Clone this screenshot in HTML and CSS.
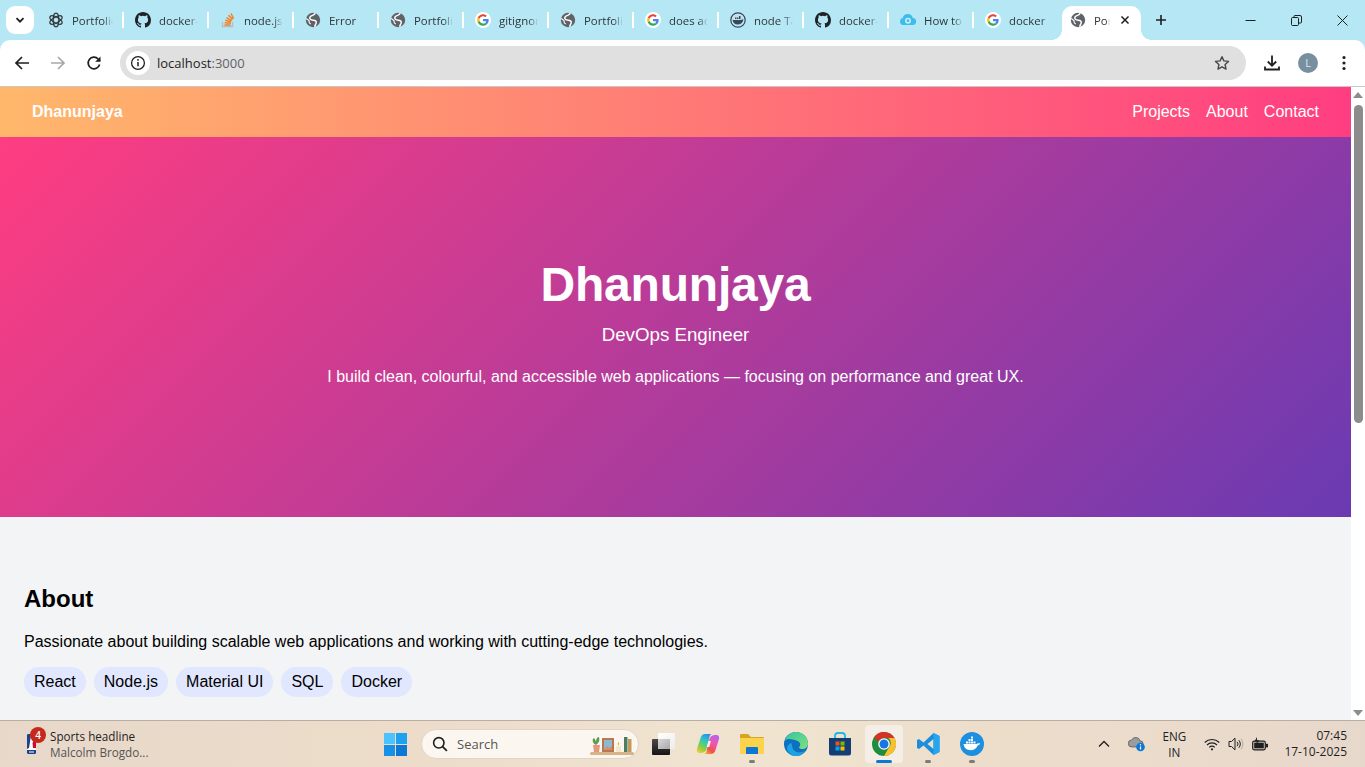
FILE: index.html
```html
<!DOCTYPE html>
<html lang="en">
<head>
<meta charset="utf-8">
<title>Portfolio</title>
<link rel="stylesheet" href="styles.css">
</head>
<body>
<svg class="defs" width="0" height="0" aria-hidden="true">
  <defs>
    <symbol id="globe" viewBox="0 0 16 16">
      <circle cx="8" cy="8" r="7.200" fill="#5f6368"/>
      <path d="M10.200 1.200C9.800 3.600 6.600 3 5.200 4.800 3.600 7 6.200 8 8.200 8.200c2 .2 3.400.8 3 2.600-.3 1.300-1.200 2.400-1.600 4" fill="none" stroke="#fff" stroke-width="1.500"/>
      <path d="M1.200 6.500 4 8.600l.3 2.200 1.500 1.400" fill="none" stroke="#fff" stroke-width="1.100"/>
    </symbol>
    <symbol id="github" viewBox="0 0 16 16">
      <path fill="#1f2328" d="M8 0C3.58 0 0 3.58 0 8c0 3.54 2.29 6.53 5.47 7.59.4.07.55-.17.55-.38 0-.19-.01-.82-.01-1.49-2.010.37-2.530-.49-2.690-.94-.09-.23-.48-.94-.82-1.130-.28-.15-.68-.52-.01-.53.63-.01 1.080.58 1.230.82.720 1.210 1.870.87 2.330.66.070-.52.280-.87.510-1.070-1.780-.2-3.640-.89-3.640-3.950 0-.87.31-1.590.82-2.150-.08-.2-.36-1.020.08-2.120 0 0 .67-.21 2.200.82a7.500 7.500 0 0 1 4 0c1.530-1.040 2.200-.82 2.200-.82.440 1.100.160 1.920.080 2.120.510.560.820 1.270.820 2.150 0 3.070-1.870 3.750-3.650 3.950.290.250.540.730.540 1.480 0 1.070-.010 1.930-.010 2.200 0 .210.150.460.550.380A8.010 8.010 0 0 0 16 8c0-4.420-3.580-8-8-8z"/>
    </symbol>
    <symbol id="google" viewBox="0 0 48 48">
      <circle cx="24" cy="24" r="24" fill="#fff"/>
      <path fill="#ea4335" d="M24 13c3 0 5.200 1.100 6.900 2.700l4.600-4.500C32.500 8.400 28.700 6.500 24 6.500c-6.800 0-12.700 3.900-15.600 9.700l5.400 4.200C15.200 16.100 19.200 13 24 13z"/>
      <path fill="#4285f4" d="M41 24.400c0-1.400-.1-2.500-.4-3.600H24v6.600h9.800c-.4 2.300-1.700 4.200-3.700 5.500l5.300 4.100c3.500-3.200 5.600-7 5.600-12.600z"/>
      <path fill="#fbbc05" d="M13.800 27.600c-.4-1.100-.6-2.300-.6-3.600s.2-2.500.6-3.600l-5.400-4.200C7.200 18.500 6.500 21.200 6.500 24s.7 5.500 1.900 7.800z"/>
      <path fill="#34a853" d="M24 41.500c4.700 0 8.700-1.500 11.400-4.400l-5.300-4.100c-1.500 1-3.400 1.700-6.100 1.700-4.800 0-8.800-3.100-10.200-7.500l-5.400 4.200c2.900 5.800 8.800 10.100 15.600 10.100z"/>
    </symbol>
    <symbol id="openai" viewBox="0 0 16 16">
      <g fill="none" stroke="#33383c" stroke-width="1.250">
        <ellipse cx="8" cy="8" rx="2.800" ry="6.800"/>
        <ellipse cx="8" cy="8" rx="2.800" ry="6.800" transform="rotate(60 8 8)"/>
        <ellipse cx="8" cy="8" rx="2.800" ry="6.800" transform="rotate(120 8 8)"/>
      </g>
    </symbol>
    <symbol id="stack" viewBox="0 0 16 16">
      <path fill="none" stroke="#bcbbbb" stroke-width="1.300" d="M2.500 10v4.500h10V10"/>
      <path fill="none" stroke="#f48024" stroke-width="1.500" d="M4.500 13h6M4.700 10.700l6 .6M5.300 8.200l5.800 1.600M6.500 5.700l5.200 3M8.500 3.200l4.200 4.200M11 1.500l2.600 5"/>
    </symbol>
    <symbol id="dockerring" viewBox="0 0 16 16">
      <circle cx="8" cy="8" r="7.200" fill="#c9e0ea" stroke="#2e4a5e" stroke-width="1.200"/>
      <path fill="#2e4a5e" d="M2.500 8h8c.6-.5 1.500-.8 3-.5-.5 3-2.800 5-6 5-2.700 0-4.500-1.800-5-4.500zM5 5.500h1.500V7H5zM7 5.500h1.500V7H7zM9 4h1.500v3H9z"/>
    </symbol>
    <symbol id="cloud" viewBox="0 0 16 16">
      <path fill="#3dbdee" d="M3.500 13a3.500 3.500 0 0 1-.8-6.900A5.200 5.200 0 0 1 12.800 6 3.500 3.500 0 0 1 12.500 13z"/>
      <circle cx="8" cy="8.700" r="3" fill="#c9eefa"/>
      <circle cx="8" cy="8.700" r="1.400" fill="#3dbdee"/>
    </symbol>
    <symbol id="dockerwhale" viewBox="0 0 24 24">
      <circle cx="12" cy="12" r="12" fill="#1d8fe1"/>
      <path fill="#fff" d="M3.500 12h13c.8-.8 2.200-1 3.800-.5-.6 1.200-1.600 1.800-2.600 1.900-1.200 3-3.800 4.800-7.200 4.800-3.900 0-6.500-2.400-7-6.200zM6 9.500h2v2H6zM8.500 9.500h2v2h-2zM11 9.500h2v2h-2zM13.500 9.500h2v2h-2zM8.500 7h2v2h-2zM11 7h2v2h-2zM11 4.500h2v2h-2z"/>
    </symbol>
  </defs>
</svg>

<div class="screen">
  <header class="tabstrip">
    <button class="tabsearch" type="button" aria-label="Search tabs">
      <svg width="12" height="12" viewBox="0 0 12 12"><path d="M2.500 4.200 6 7.700l3.500-3.500" fill="none" stroke="#1f1f1f" stroke-width="1.800"/></svg>
    </button>
    <div class="tabs">
      <div class="tab"><svg class="favicon"><use href="#openai"/></svg><span class="tabtitle">Portfolio</span></div>
      <div class="tab"><svg class="favicon"><use href="#github"/></svg><span class="tabtitle">docker-compose</span></div>
      <div class="tab"><svg class="favicon"><use href="#stack"/></svg><span class="tabtitle">node.js</span></div>
      <div class="tab"><svg class="favicon"><use href="#globe"/></svg><span class="tabtitle">Error</span></div>
      <div class="tab"><svg class="favicon"><use href="#globe"/></svg><span class="tabtitle">Portfolio</span></div>
      <div class="tab"><svg class="favicon"><use href="#google"/></svg><span class="tabtitle">gitignore</span></div>
      <div class="tab"><svg class="favicon"><use href="#globe"/></svg><span class="tabtitle">Portfolio</span></div>
      <div class="tab"><svg class="favicon"><use href="#google"/></svg><span class="tabtitle">does add</span></div>
      <div class="tab"><svg class="favicon"><use href="#dockerring"/></svg><span class="tabtitle">node Tags</span></div>
      <div class="tab"><svg class="favicon"><use href="#github"/></svg><span class="tabtitle">docker-compose</span></div>
      <div class="tab"><svg class="favicon"><use href="#cloud"/></svg><span class="tabtitle">How to</span></div>
      <div class="tab tab-last"><svg class="favicon"><use href="#google"/></svg><span class="tabtitle">docker</span></div>
      <div class="tab tab-active">
        <svg class="favicon"><use href="#globe"/></svg>
        <span class="tabtitle tabtitle-short">Portfolio</span>
        <svg class="tabclose" width="10" height="10" viewBox="0 0 10 10"><path d="m1.500 1.500 7 7m0-7-7 7" stroke="#1f1f1f" stroke-width="1.500"/></svg>
      </div>
    </div>
    <button class="newtab" type="button" aria-label="New tab">
      <svg width="12" height="12" viewBox="0 0 12 12"><path d="M6 1v10M1 6h10" stroke="#1f1f1f" stroke-width="1.600"/></svg>
    </button>
    <div class="winctl">
      <span class="winbtn"><svg width="11" height="11" viewBox="0 0 11 11"><path d="M.5 5.500h10" stroke="#1f1f1f"/></svg></span>
      <span class="winbtn"><svg width="11" height="11" viewBox="0 0 11 11"><path d="M.5 3.500a1 1 0 0 1 1-1h5a1 1 0 0 1 1 1v6a1 1 0 0 1-1 1h-5a1 1 0 0 1-1-1zM3 2.500v-1a1 1 0 0 1 1-1h5a1.500 1.500 0 0 1 1.500 1.500v5a1 1 0 0 1-1 1h-2" fill="none" stroke="#1f1f1f"/></svg></span>
      <span class="winbtn"><svg width="11" height="11" viewBox="0 0 11 11"><path d="m.5.500 10 10m0-10-10 10" stroke="#1f1f1f"/></svg></span>
    </div>
  </header>

  <div class="toolbar">
    <svg class="navicon" width="16" height="16" viewBox="0 0 16 16"><path d="M15 8H2.500M8 2 2 8l6 6" fill="none" stroke="#1f1f1f" stroke-width="1.700"/></svg>
    <svg class="navicon" width="16" height="16" viewBox="0 0 16 16"><path d="M1 8h12.500M8 2l6 6-6 6" fill="none" stroke="#a8a8a8" stroke-width="1.700"/></svg>
    <svg class="navicon" width="16" height="16" viewBox="0 0 16 16"><path d="M13.600 9.500A5.800 5.800 0 1 1 12.200 4L14 5.800" fill="none" stroke="#1f1f1f" stroke-width="1.700"/><path d="M14.500 1.500v5.300H9.200z" fill="#1f1f1f"/></svg>
    <div class="omnibox">
      <span class="siteinfo"><svg width="16" height="16" viewBox="0 0 16 16"><circle cx="8" cy="8" r="6.400" fill="none" stroke="#1f1f1f" stroke-width="1.300"/><path d="M8 7v4.300" stroke="#1f1f1f" stroke-width="1.500"/><circle cx="8" cy="4.900" r=".9" fill="#1f1f1f"/></svg></span>
      <span class="url">localhost<span class="urlport">:3000</span></span>
      <svg class="star" width="16" height="16" viewBox="0 0 16 16"><path d="m8 1.700 1.900 4.200 4.600.5-3.400 3.100.9 4.600L8 11.800l-4 2.300.9-4.600L1.500 6.400l4.600-.5z" fill="none" stroke="#474747" stroke-width="1.400" stroke-linejoin="round"/></svg>
    </div>
    <div class="toolicons">
      <svg width="18" height="18" viewBox="0 0 18 18"><path d="M9 1.500v10M4.800 7.500 9 11.700l4.200-4.200M2 12.500v3h14v-3" fill="none" stroke="#1f1f1f" stroke-width="1.800"/></svg>
      <span class="avatar">L</span>
      <svg width="4" height="16" viewBox="0 0 4 16"><circle cx="2" cy="2.500" r="1.600" fill="#1f1f1f"/><circle cx="2" cy="8" r="1.600" fill="#1f1f1f"/><circle cx="2" cy="13.500" r="1.600" fill="#1f1f1f"/></svg>
    </div>
  </div>

  <div class="viewport">
    <main class="page">
      <nav class="sitenav">
        <a class="brand">Dhanunjaya</a>
        <div class="navlinks"><a>Projects</a><a>About</a><a>Contact</a></div>
      </nav>
      <section class="hero">
        <h1>Dhanunjaya</h1>
        <p class="role">DevOps Engineer</p>
        <p class="intro">I build clean, colourful, and accessible web applications — focusing on performance and great UX.</p>
      </section>
      <section class="about">
        <h2>About</h2>
        <p>Passionate about building scalable web applications and working with cutting-edge technologies.</p>
        <ul class="chips">
          <li>React</li><li>Node.js</li><li>Material UI</li><li>SQL</li><li>Docker</li>
        </ul>
      </section>
    </main>
    <div class="scrollbar">
      <span class="arrow arrow-up"></span>
      <span class="thumb"></span>
      <span class="arrow arrow-down"></span>
    </div>
  </div>

  <footer class="taskbar">
    <div class="widget">
      <span class="widgeticon">
        <svg width="9" height="20" viewBox="0 0 9 20"><rect width="9" height="20" rx="1.200" fill="#fff"/><path d="M0 1.200A1.200 1.200 0 0 1 1.200 0H4L3 8l-1 6-2 1z" fill="#1d428a"/><path d="M5 0h2.800A1.200 1.200 0 0 1 9 1.200V14H6l-.5-5L7 6z" fill="#c8102e"/><path d="M0 16h9v2.800A1.200 1.200 0 0 1 7.800 20H1.200A1.200 1.200 0 0 1 0 18.800z" fill="#1d428a"/><path d="M2 17.500h5v1H2z" fill="#fff"/></svg>
        <span class="badge">4</span>
      </span>
      <span class="widgettext"><span class="widgethead">Sports headline</span><span class="widgetsub">Malcolm Brogdo...</span></span>
    </div>
    <div class="centerbar">
      <span class="tb"><svg width="23" height="23" viewBox="0 0 23 23"><rect width="11" height="11" fill="#4cc2ff"/><rect x="12" width="11" height="11" fill="#1ea1ef"/><rect y="12" width="11" height="11" fill="#1592e6"/><rect x="12" y="12" width="11" height="11" fill="#0a78d4"/></svg></span>
      <div class="searchbox">
        <svg width="16" height="16" viewBox="0 0 16 16"><circle cx="6.800" cy="6.800" r="5.200" fill="none" stroke="#1f1f1f" stroke-width="1.600"/><path d="m10.600 10.600 4.300 4.300" stroke="#1f1f1f" stroke-width="1.800"/></svg>
        <span class="searchlabel">Search</span>
        <svg class="shelf" width="46" height="24" viewBox="0 0 46 24">
          <rect x="1" y="20" width="44" height="3" rx="1.500" fill="#d8b388"/>
          <path d="M4 13h7l-1 7H5z" fill="#e5977a"/>
          <path d="M7 13C3 11 3 7 5 6c1 1 2 3 2 4 0-3 1-5 3-5 1 3 0 6-3 8z" fill="#5f9a57"/>
          <rect x="13" y="6" width="12" height="14" fill="#b8774e"/>
          <rect x="15" y="8" width="8" height="10" fill="#8fb9cf"/>
          <path d="M15 18l3-4 2 2 3-2v4z" fill="#d78d68"/>
          <rect x="27" y="14" width="5" height="6" rx="1" fill="#f7e6c5"/>
          <path d="M29.500 10c1 1.200 1 2.500 0 3.500-1-1-1-2.300 0-3.500z" fill="#f2a640"/>
          <rect x="35" y="5" width="3.500" height="15" fill="#4f7d5c"/>
          <rect x="39" y="7" width="3.500" height="13" fill="#c49a5c"/>
        </svg>
      </div>
      <span class="tb"><svg width="24" height="24" viewBox="0 0 24 24"><defs><linearGradient id="tvd" x1="0" y1="0" x2="0" y2="1"><stop offset="0" stop-color="#4a4a4a"/><stop offset="1" stop-color="#141414"/></linearGradient><linearGradient id="tvw" x1="0" y1="0" x2="1" y2="1"><stop offset="0" stop-color="#fff"/><stop offset="1" stop-color="#ececec"/></linearGradient><linearGradient id="tvo" x1="0" y1="0" x2="1" y2="1"><stop offset="0" stop-color="#d8d8d8"/><stop offset="1" stop-color="#a8a8a8"/></linearGradient></defs><rect x="6" y="1" width="17" height="16" rx="1" fill="url(#tvw)"/><rect y="7" width="18" height="16" rx="1" fill="url(#tvd)"/><rect x="6" y="7" width="12" height="10" fill="url(#tvo)"/></svg></span>
      <span class="tb"><svg width="24" height="24" viewBox="0 0 24 24"><defs><linearGradient id="cpa" x1=".7" y1="0" x2=".2" y2="1"><stop offset="0" stop-color="#2a8ff0"/><stop offset=".35" stop-color="#2fc6c0"/><stop offset=".7" stop-color="#7fd04a"/><stop offset="1" stop-color="#f5c92e"/></linearGradient><linearGradient id="cpb" x1=".8" y1="0" x2=".2" y2="1"><stop offset="0" stop-color="#b066f0"/><stop offset=".4" stop-color="#f055b0"/><stop offset=".75" stop-color="#f0504a"/><stop offset="1" stop-color="#f5a030"/></linearGradient></defs><path d="M15 22H8c1.500 0 2-1 2.400-2.500L13.500 7c.7-2.500 3-4 5.500-4h1.500c2 0 3.200 2 2.500 4L19.500 18c-.8 2.500-2.300 4-4.500 4z" fill="url(#cpb)"/><path d="M9 2h7c-1.500 0-2 1-2.400 2.500L10.500 17c-.7 2.500-3 4-5.500 4H3.500C1.500 21 .3 19 1 17L4.500 6C5.300 3.500 6.800 2 9 2z" fill="url(#cpa)"/><path d="M12.500 9h2.500l-1.700 6h-2.500z" fill="#f6f0e6"/></svg></span>
      <span class="tb tb-open"><svg width="24" height="24" viewBox="0 0 24 24"><path d="M0 3a1 1 0 0 1 1-1h7l3 3h12a1 1 0 0 1 1 1v3H0z" fill="#d9a520"/><path d="M0 6h24v15a1 1 0 0 1-1 1H1a1 1 0 0 1-1-1z" fill="#fcd34d"/><path d="M7 15h10a1 1 0 0 1 1 1v6H6v-6a1 1 0 0 1 1-1z" fill="#0a78d4"/></svg></span>
      <span class="tb"><svg width="24" height="24" viewBox="0 0 24 24"><defs><linearGradient id="edg" x1="0" y1="0" x2="1" y2="1"><stop offset="0" stop-color="#35c7a0"/><stop offset="1" stop-color="#7fe07c"/></linearGradient></defs><circle cx="12" cy="12" r="12" fill="#0f6fc0"/><path d="M1 9C2.500 3.500 7 0 12 0c7 0 12 5 12 11.500 0 3.500-2.500 5.500-5.500 5.500-2 0-3.500-.7-3.500-1.800 2-1.700 1.500-4.700-1-6C10 7.500 3 5.500 1 9z" fill="url(#edg)"/><path d="M8 13c0 4 3 7.500 7.500 7.500 2 0 4-.7 5.500-2-2 3.500-5.300 5.500-9 5.500C8 24 4 21 3 17c0-5 5-8 5-4z" fill="#1ba3e4"/></svg></span>
      <span class="tb"><svg width="24" height="24" viewBox="0 0 24 24"><path d="M7 6V4a3 3 0 0 1 3-3h4a3 3 0 0 1 3 3v2" fill="none" stroke="#1fb6e8" stroke-width="1.800"/><path d="M1 6h22v15a2.500 2.500 0 0 1-2.500 2.500h-17A2.500 2.500 0 0 1 1 21z" fill="#123e74"/><rect x="7.500" y="9.500" width="4" height="4" fill="#f25022"/><rect x="12.500" y="9.500" width="4" height="4" fill="#7fba00"/><rect x="7.500" y="14.500" width="4" height="4" fill="#00a4ef"/><rect x="12.500" y="14.500" width="4" height="4" fill="#ffb900"/></svg></span>
      <span class="tb tb-active"><svg width="24" height="24" viewBox="0 0 24 24"><circle cx="12" cy="12" r="12" fill="#1e8e3e"/><path d="M12 0a12 12 0 0 1 10.400 6H12a6 6 0 0 0-5.600 3.700L2.100 5.200A12 12 0 0 1 12 0z" fill="#d93025"/><path d="M22.400 6A12 12 0 0 1 12 24l5.200-9a6 6 0 0 0-1-9z" fill="#fbc02d"/><circle cx="12" cy="12" r="5.800" fill="#fff"/><circle cx="12" cy="12" r="4.500" fill="#1a73e8"/></svg></span>
      <span class="tb tb-open"><svg width="24" height="24" viewBox="0 0 24 24"><path d="M17.500 1 23.500 4v16l-6 3L7.500 13.500 3 17 1 16V8l2-1 4.500 3.500zM17.500 7l-6 5 6 5z" fill="#1c8fdc"/><path d="M17.500 1 23.500 4v16l-6 3z" fill="#24a7ee"/></svg></span>
      <span class="tb tb-open"><svg width="24" height="24"><use href="#dockerwhale"/></svg></span>
    </div>
    <div class="tray">
      <svg class="tray-chev" width="12" height="8" viewBox="0 0 12 8"><path d="m1 6.500 5-5 5 5" fill="none" stroke="#1f1f1f" stroke-width="1.300"/></svg>
      <span class="tray-cloud"><svg width="18" height="16" viewBox="0 0 18 16"><path d="M4 11a3.500 3.500 0 0 1-.4-7A4.500 4.500 0 0 1 12 4.800 3 3 0 0 1 12 11z" fill="#9a9da0" stroke="#3a3a3a" stroke-width=".6"/><circle cx="12.500" cy="11" r="4.300" fill="#0a78d4"/><path d="M12.500 10.500v3" stroke="#fff" stroke-width="1.200"/><circle cx="12.500" cy="8.800" r=".7" fill="#fff"/></svg></span>
      <span class="tray-lang"><span>ENG</span><span>IN</span></span>
      <span class="tray-sys">
        <svg width="16" height="13" viewBox="0 0 16 13"><path d="M.7 4.500a10.500 10.500 0 0 1 14.600 0M3 7a7 7 0 0 1 10 0M5.300 9.300a3.600 3.600 0 0 1 5.400 0" fill="none" stroke="#1f1f1f" stroke-width="1.100"/><circle cx="8" cy="11.300" r="1.100" fill="#1f1f1f"/></svg>
        <svg width="16" height="14" viewBox="0 0 16 14"><path d="M1 4.500h2.500L7 1.200v11.600L3.500 9.500H1z" fill="none" stroke="#1f1f1f"/><path d="M9 4.800a3 3 0 0 1 0 4.400M10.800 3.200a5.500 5.500 0 0 1 0 7.600" fill="none" stroke="#1f1f1f"/><path d="M13 1.800a8 8 0 0 1 0 10.400" fill="none" stroke="#b5aa9f"/></svg>
        <svg width="16" height="14" viewBox="0 0 16 14"><rect x=".7" y="4.200" width="12.600" height="8.600" rx="1.500" fill="#d8cabc" stroke="#1f1f1f" stroke-width="1.200"/><rect x="2.200" y="5.700" width="9.600" height="5.600" fill="#1f1f1f"/><rect x="14" y="6.800" width="2" height="3.600" fill="#1f1f1f"/><path d="M5 0 2.500 4.500H5L3.800 8 7.500 3.300H5z" fill="#1f1f1f"/></svg>
      </span>
      <span class="tray-clock"><span>07:45</span><span>17-10-2025</span></span>
    </div>
  </footer>
</div>
</body>
</html>
```

FILE: styles.css
```css
* { box-sizing: border-box; }
html, body { margin: 0; padding: 0; height: 100%; overflow: hidden; }
body { font-family: "Liberation Sans", Arial, sans-serif; color: #000; }
.defs { position: absolute; }
button { border: 0; padding: 0; background: none; font: inherit; }

.screen { width: 1365px; height: 767px; display: flex; flex-direction: column; overflow: hidden; background: #b5e7f4; }

/* Browser tab strip */
.tabstrip { height: 40px; background: #b5e7f4; display: flex; align-items: flex-end; flex: none; }
.tabsearch { width: 28px; height: 28px; margin: 0 5px 6px 6px; background: #fff; border-radius: 9px; display: flex; align-items: center; justify-content: center; }
.tabs { display: flex; height: 34px; }
.tab { width: 85px; height: 34px; display: flex; align-items: center; padding: 0 11px; gap: 8px; font: 11.4px "Open Sans", sans-serif; color: #30363a; position: relative; }
.tab:first-child { padding-left: 9px; }
.tab::after { content: ""; position: absolute; right: 0; top: 6px; width: 2px; height: 16px; background: #fff; }
.tab-last::after { display: none; }
.favicon { width: 16px; height: 16px; flex: none; margin-top: -6px; }
.tabtitle { flex: 1; min-width: 0; overflow: hidden; white-space: nowrap; margin-top: -6px; -webkit-mask-image: linear-gradient(90deg, #000 76%, transparent); mask-image: linear-gradient(90deg, #000 76%, transparent); }
.tab-last { width: 88px; }
.tab-active { width: 79px; background: #fff; border-radius: 10px 10px 0 0; padding: 0 11px 0 8px; }
.tab-active::before, .tab-active::after { content: ""; position: absolute; top: auto; bottom: 0; width: 10px; height: 10px; background: radial-gradient(circle at 0 0, transparent 9.5px, #fff 10px); }
.tab-active::before { left: -10px; right: auto; }
.tab-active::after { right: -10px; left: auto; background: radial-gradient(circle at 100% 0, transparent 9.5px, #fff 10px); }
.tabtitle-short { flex: none; width: 16px; }
.tabclose { flex: none; margin: -6px 0 0 2px; }
.newtab { width: 16px; height: 16px; margin: 0 0 12px 12px; display: flex; align-items: center; justify-content: center; }
.winctl { margin-left: auto; display: flex; height: 40px; }
.winbtn { width: 46px; height: 40px; display: flex; align-items: center; justify-content: center; }

/* Address toolbar */
.toolbar { height: 47px; flex: none; background: #fff; border-bottom: 1px solid #c8c8c8; border-radius: 10px 10px 0 0; display: flex; align-items: center; padding: 0 0 1px 14px; }
.navicon { flex: none; margin-right: 20px; }
.navicon:nth-child(3) { margin-right: 18px; }
.omnibox { width: 1126px; height: 34px; background: #e0e0e0; border-radius: 17px; display: flex; align-items: center; padding: 0 16px 0 6px; }
.siteinfo { width: 24px; height: 24px; background: #fff; border-radius: 50%; display: flex; align-items: center; justify-content: center; }
.url { margin-left: 7px; font: 13px "Open Sans", sans-serif; color: #1f1f1f; flex: 1; }
.urlport { color: #5f6368; }
.toolicons { display: flex; align-items: center; margin-left: 17px; }
.toolicons svg:first-child { margin-right: 17px; }
.avatar { width: 20px; height: 20px; border-radius: 50%; background: #76909f; color: #dfe7ec; font: 11px "Open Sans", sans-serif; display: flex; align-items: center; justify-content: center; margin-right: 24px; }

/* Page area */
.viewport { height: 633px; flex: none; display: flex; overflow: hidden; }
.page { width: 1351px; background: #f3f4f6; overflow: hidden; }
.sitenav { height: 50px; display: flex; align-items: center; justify-content: space-between; padding: 0 32px; background: linear-gradient(90deg, #ffb86b, #ff3d81); color: #fff; }
.brand { font-weight: 700; font-size: 16px; }
.navlinks { display: flex; gap: 16px; font-size: 16px; }
.hero { height: 380px; background: linear-gradient(135deg, #ff3d81, #6a3ab2); color: #fff; display: flex; flex-direction: column; align-items: center; padding-top: 120px; }
.hero h1 { font-size: 48px; line-height: 56px; margin: 0; font-weight: 700; letter-spacing: -0.2px; }
.role { font-size: 18.72px; line-height: 27px; margin: 8px 0 0; }
.intro { font-size: 16px; line-height: 24px; margin: 17px 0 0; }
.about { padding: 66px 24px 0; }
.about h2 { font-size: 24px; line-height: 32px; margin: 0; font-weight: 700; }
.about p { font-size: 16px; line-height: 24px; margin: 15px 0 0; }
.chips { list-style: none; display: flex; gap: 8px; margin: 13px 0 0; padding: 0; }
.chips li { height: 30px; line-height: 29px; padding: 0 10px; background: #e0e7ff; border-radius: 15px; font-size: 16px; }

/* Scrollbar */
.scrollbar { width: 14px; background: #fff; display: flex; flex-direction: column; align-items: center; }
.arrow { width: 0; height: 0; border-left: 5px solid transparent; border-right: 5px solid transparent; flex: none; }
.arrow-up { border-bottom: 6px solid #8c8c8c; margin-top: 5px; }
.thumb { width: 9px; height: 318px; background: #8c8c8c; border-radius: 5px; margin-top: 7px; }
.arrow-down { border-top: 6px solid #8c8c8c; margin-top: auto; margin-bottom: 4px; }

/* Windows taskbar */
.taskbar { height: 47px; flex: none; border-top: 1px solid #b9aea4; background: linear-gradient(90deg, #e8d8ca 0%, #ecdcc9 30%, #f0e4d0 55%, #ecddcb 75%, #e7d8cc 100%); display: flex; align-items: center; font-family: "Open Sans", sans-serif; color: #1f1f1f; }
.widget { width: 373px; display: flex; align-items: center; padding-left: 26px; flex: none; }
.widgeticon { position: relative; width: 10px; height: 20px; margin-right: 14px; }
.widgeticon svg { display: block; margin-left: 1px; }
.badge { position: absolute; left: 4px; top: -7px; width: 16px; height: 16px; border-radius: 50%; background: #c4291c; color: #fff; font-size: 10px; font-weight: 600; display: flex; align-items: center; justify-content: center; }
.widgettext { display: flex; flex-direction: column; font-size: 11.7px; line-height: 16px; }
.widgetsub { color: #555; }
.centerbar { display: flex; align-items: center; height: 38px; flex: none; }
.tb { width: 44px; height: 38px; display: flex; align-items: center; justify-content: center; position: relative; border-radius: 4px; }
.tb svg { display: block; }
.tb-open::after { content: ""; position: absolute; bottom: 0; left: 19px; width: 6px; height: 3px; border-radius: 2px; background: #7b7b7b; }
.tb-active { background: #f4eee6; width: 38px; margin: 0 3px; }
.tb-active::after { content: ""; position: absolute; bottom: 0; left: 11px; width: 16px; height: 3px; border-radius: 2px; background: #0a78d4; }
.searchbox { width: 218px; height: 30px; margin-left: 4px; margin-right: 3px; border-radius: 15px; background: #fbf7f0; border: 1px solid #e0d6c8; display: flex; align-items: center; padding: 0 3px 0 10px; font-size: 13px; color: #555; flex: none; }
.searchlabel { margin-left: 9px; flex: 1; }
.tray { margin-left: auto; display: flex; align-items: center; padding-right: 18px; font-size: 11.7px; }
.tray-chev { margin-right: 18px; }
.tray-cloud { display: flex; margin-right: 13px; }
.tray-lang { display: flex; flex-direction: column; align-items: center; line-height: 16px; margin-right: 15px; width: 30px; }
.tray-sys { display: flex; align-items: center; gap: 8px; margin-right: 16px; }
.tray-clock { display: flex; flex-direction: column; align-items: flex-end; line-height: 16px; font-size: 12px; }
```
